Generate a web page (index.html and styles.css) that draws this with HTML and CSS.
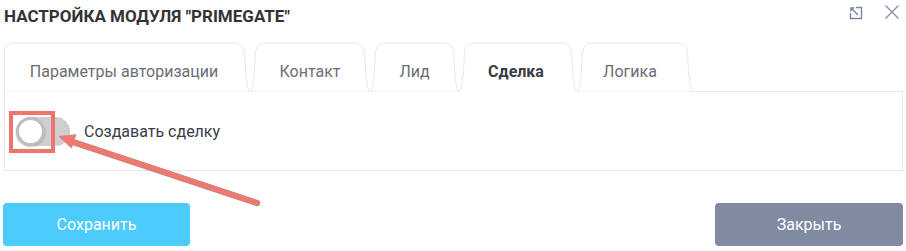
FILE: index.html
```html
<!DOCTYPE html>
<html lang="ru">
<head>
<meta charset="utf-8">
<title>Настройка модуля</title>
<link rel="stylesheet" href="styles.css">
</head>
<body>
<div class="page">
  <div class="header">
    <div class="title">НАСТРОЙКА МОДУЛЯ "PRIMEGATE"</div>
    <div class="header-icons">
      <svg class="ico-expand" width="14" height="14" viewBox="0 0 14 14">
        <path d="M7 1.5H12.5V12.5H1.5V7" fill="none" stroke="#7d879b" stroke-width="1.4"/>
        <path d="M2 2L9 9" stroke="#7d879b" stroke-width="1.4"/>
        <path d="M1.3 1.3H6L1.3 6Z" fill="#7d879b"/>
      </svg>
      <svg class="ico-close" width="16" height="16" viewBox="0 0 16 16">
        <path d="M1.5 1.5L14.5 14.5M14.5 1.5L1.5 14.5" stroke="#8690a3" stroke-width="1.4"/>
      </svg>
    </div>
  </div>

  <div class="tabs">
    <div class="tab t1">
      <svg class="tab-shape" width="246" height="50" viewBox="0 0 246 50">
        <path d="M0.5 50 L0.5 10 Q0.5 1 10 1 L231 1 Q239 1 240.5 10 C241.5 30 242.5 44 245.5 50 Z" fill="#fff" stroke="#e6e9ef"/>
      </svg>
      <span class="tab-label">Параметры авторизации</span>
    </div>
    <div class="tab t2">
      <svg class="tab-shape" width="120" height="50" viewBox="0 0 120 50">
        <path d="M0.5 50 C3.5 44 4.5 30 5.5 10 Q7 1 15 1 L105 1 Q113 1 114.5 10 C115.5 30 116.5 44 119.5 50 Z" fill="#fff" stroke="#e6e9ef"/>
      </svg>
      <span class="tab-label">Контакт</span>
    </div>
    <div class="tab t3">
      <svg class="tab-shape" width="89" height="50" viewBox="0 0 89 50">
        <path d="M0.5 50 C3.5 44 4.5 30 5.5 10 Q7 1 15 1 L74 1 Q82 1 83.5 10 C84.5 30 85.5 44 88.5 50 Z" fill="#fff" stroke="#e6e9ef"/>
      </svg>
      <span class="tab-label">Лид</span>
    </div>
    <div class="tab t4 active">
      <svg class="tab-shape" width="118" height="50" viewBox="0 0 118 50">
        <path d="M0 51 C3.5 44 4.5 30 5.5 10 Q7 1 15 1 L103 1 Q111 1 112.5 10 C113.5 30 114.5 44 118 51 Z" fill="#fff"/>
        <path d="M0.5 50 C3.5 44 4.5 30 5.5 10 Q7 1 15 1 L103 1 Q111 1 112.5 10 C113.5 30 114.5 44 117.5 50" fill="none" stroke="#e6e9ef"/>
      </svg>
      <span class="tab-label">Сделка</span>
    </div>
    <div class="tab t5">
      <svg class="tab-shape" width="116" height="50" viewBox="0 0 116 50">
        <path d="M0.5 50 C3.5 44 4.5 30 5.5 10 Q7 1 15 1 L101 1 Q109 1 110.5 10 C111.5 30 112.5 44 115.5 50 Z" fill="#fff" stroke="#e6e9ef"/>
      </svg>
      <span class="tab-label">Логика</span>
    </div>
  </div>

  <div class="panel">
    <div class="toggle-wrap">
      <div class="toggle">
        <span class="knob"></span>
      </div>
      <span class="mark-box"></span>
    </div>
    <span class="toggle-label">Создавать сделку</span>
  </div>

  <div class="actions">
    <button class="btn btn-save">Сохранить</button>
    <button class="btn btn-close">Закрыть</button>
  </div>

  <svg class="annotation" width="906" height="251" viewBox="0 0 906 251">
    <line x1="257" y1="203" x2="70" y2="141" stroke="#b98a78" stroke-width="6.5" stroke-linecap="round"/>
    <line x1="257" y1="203" x2="70" y2="141" stroke="#f27672" stroke-width="4.5" stroke-linecap="round"/>
    <path d="M59 136.5 L71.5 148 L76 134.5 Z" fill="#f27672" stroke="#c98a7c" stroke-width="0.8" stroke-linejoin="round"/>
  </svg>
</div>
</body>
</html>
```

FILE: styles.css
```css
* {
  box-sizing: border-box;
}

html, body {
  margin: 0;
  padding: 0;
  background: #ffffff;
}

body {
  font-family: Roboto, "Liberation Sans", Arial, sans-serif;
  color: #333333;
}

.page {
  position: relative;
  width: 906px;
  height: 251px;
  padding: 0 3px 0 4px;
  overflow: hidden;
}

.header {
  height: 32px;
  display: flex;
  align-items: center;
  justify-content: space-between;
}

.title {
  font-size: 17px;
  font-weight: 700;
  color: #333333;
  letter-spacing: 0;
}

.header-icons {
  display: flex;
  align-items: center;
  gap: 21px;
  margin-top: -8px;
  margin-right: 3px;
}

.ico-expand {
  display: block;
  margin-top: 1px;
}

.ico-close {
  display: block;
}

.tabs {
  position: relative;
  z-index: 2;
  display: flex;
  height: 50px;
  margin-top: 10px;
}

.tab {
  position: relative;
  height: 50px;
  display: flex;
  align-items: center;
  justify-content: center;
  padding-top: 8px;
}

.t1 { width: 246px; }
.t2 { width: 120px; }
.t3 { width: 89px; }
.t4 { width: 118px; }
.t5 { width: 116px; }

.tab-shape {
  position: absolute;
  left: 0;
  top: 0;
  display: block;
}

.tab-label {
  position: relative;
  font-size: 16px;
  color: #6b6e75;
}

.t1 .tab-label { margin-left: -6px; }
.t5 .tab-label { margin-right: 10px; }
.t4 .tab-label { margin-right: 4px; }

.tab.active .tab-label {
  font-weight: 700;
  color: #3a3d45;
}

.panel {
  position: relative;
  z-index: 1;
  margin-top: -1px;
  height: 80px;
  border: 1px solid #e4e7ed;
  display: flex;
  align-items: center;
  padding-left: 11px;
}

.toggle-wrap {
  position: relative;
  width: 54px;
  height: 29px;
}

.toggle {
  width: 54px;
  height: 29px;
  border-radius: 15px;
  background: #cfcfcf;
  position: relative;
}

.knob {
  position: absolute;
  left: 0;
  top: 0;
  width: 29px;
  height: 29px;
  border-radius: 50%;
  background: #ffffff;
  border: 3px solid #bebebe;
  box-shadow: 0 1px 2px rgba(0, 0, 0, 0.2);
}

.mark-box {
  position: absolute;
  left: -7px;
  top: -6px;
  width: 46px;
  height: 42px;
  border: 4px solid #ef7470;
}

.toggle-label {
  margin-left: 14px;
  font-size: 16px;
  color: #3a3d48;
}

.actions {
  display: flex;
  justify-content: space-between;
  margin-top: 32px;
  margin-left: -1px;
}

.btn {
  height: 43px;
  border: none;
  border-radius: 4px;
  color: #ffffff;
  font-family: Roboto, "Liberation Sans", Arial, sans-serif;
  font-size: 16px;
  padding: 0;
}

.btn-save {
  width: 187px;
  background: #4ccbfd;
}

.btn-close {
  width: 188px;
  background: #808ba2;
}

.annotation {
  position: absolute;
  left: 0;
  top: 0;
  z-index: 5;
  pointer-events: none;
}
```
